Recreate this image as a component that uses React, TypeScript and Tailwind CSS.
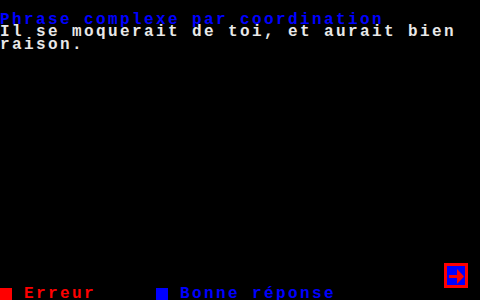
const mono = "font-['Liberation_Mono',_'DejaVu_Sans_Mono',_monospace] font-bold text-[16px] tracking-[2.4px] leading-[12.5px] whitespace-pre";

const Row = ({ children, className = '' }: { children?: React.ReactNode; className?: string }) => (
  <div className={`h-[12.5px] flex items-center ${className}`}>{children}</div>
);

const NextButton = () => (
  <svg width="24" height="25" viewBox="0 0 24 25" className="block">
    <rect x="0" y="0" width="24" height="25" fill="#ff0000" />
    <rect x="3" y="3" width="18" height="19" fill="#0000ff" />
    <rect x="5" y="12" width="10" height="3" fill="#ff0000" />
    <polygon points="13,6 20,13.5 13,21" fill="#ff0000" />
  </svg>
);

export default function App() {
  return (
    <div className={`w-[480px] h-[300px] bg-black overflow-hidden flex flex-col ${mono}`}>
      <div className="h-[13.5px]" />
      <Row className="text-[#0000ff]">Phrase complexe par coordination</Row>
      <Row className="text-[#e8e8e8]">Il se moquerait de toi, et aurait bien</Row>
      <Row className="text-[#e8e8e8]">raison.</Row>
      <div className="flex-1" />
      <div className="h-[25px] flex justify-end pr-[12px]">
        <NextButton />
      </div>
      <Row>
        <div className="w-[12px] h-[12.5px] bg-[#ff0000]" />
        <div className="w-[12px]" />
        <span className="w-[132px] text-[#ff0000]">Erreur</span>
        <div className="w-[12px] h-[12.5px] bg-[#0000ff]" />
        <div className="w-[12px]" />
        <span className="text-[#0000ff]">Bonne réponse</span>
      </Row>
    </div>
  );
}
